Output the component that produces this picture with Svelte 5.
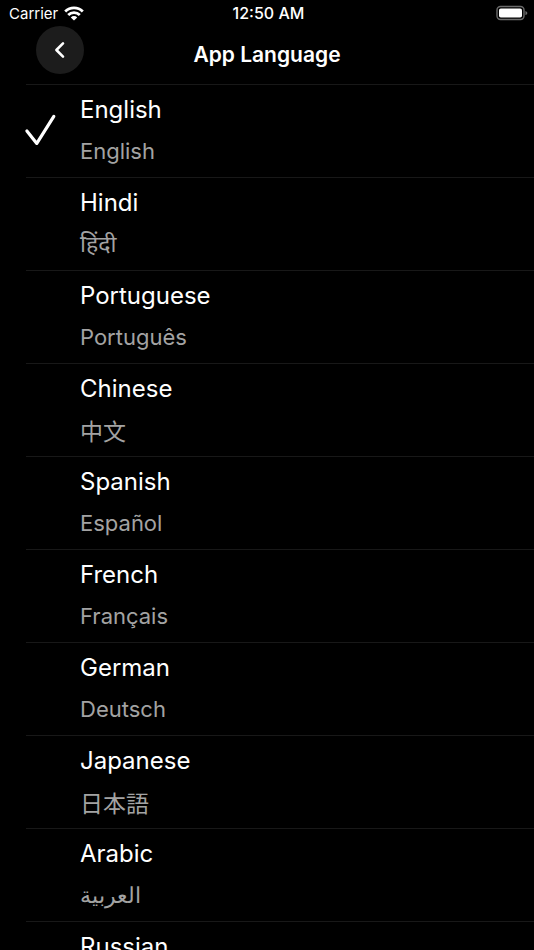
<script>
  let selected = "en";

  const languages = [
    { code: "en", name: "English", native: "English" },
    { code: "hi", name: "Hindi", native: "हिंदी" },
    { code: "pt", name: "Portuguese", native: "Português" },
    { code: "zh", name: "Chinese", native: "中文" },
    { code: "es", name: "Spanish", native: "Español" },
    { code: "fr", name: "French", native: "Français" },
    { code: "de", name: "German", native: "Deutsch" },
    { code: "ja", name: "Japanese", native: "日本語" },
    { code: "ar", name: "Arabic", native: "العربية" },
    { code: "ru", name: "Russian", native: "Русский" }
  ];

  const select = (code) => (selected = code);
  const goBack = () => history.back();
</script>

<div class="screen">
  <div class="status">
    <div class="carrier">
      <span>Carrier</span>
      <svg width="20" height="15" viewBox="0 0 20 15" fill="none" stroke="#fff" stroke-width="2.8">
        <path d="M1.2 5.4a12.6 12.6 0 0 1 17.6 0" />
        <path d="M4.2 9a8.2 8.2 0 0 1 11.6 0" />
        <path d="M10 14.6l-3.2-3.2a4.5 4.5 0 0 1 6.4 0z" fill="#fff" stroke="none" />
      </svg>
    </div>
    <span class="time">12:50 AM</span>
    <svg class="battery" width="32" height="16" viewBox="0 0 32 16">
      <rect x="1" y="1.5" width="27" height="13" rx="3.5" fill="none" stroke="#6b6b6b" stroke-width="1.4" />
      <rect x="3" y="3.5" width="23" height="9" rx="1.8" fill="#fff" />
      <path d="M29.4 5.9c1.4.5 1.9 1.2 1.9 2.1s-.5 1.6-1.9 2.1z" fill="#6b6b6b" />
    </svg>
  </div>

  <header>
    <button class="back" aria-label="Back" on:click={goBack}>
      <svg width="12" height="18" viewBox="0 0 12 18" fill="none" stroke="#fff" stroke-width="2.6" stroke-linecap="round" stroke-linejoin="round">
        <path d="M9 2.4L2.4 9L9 15.6" />
      </svg>
    </button>
    <h1>App Language</h1>
  </header>

  <ul>
    {#each languages as language}
      <li>
        <button class="row" aria-pressed={selected === language.code} on:click={() => select(language.code)}>
          <span class="check">
            {#if selected === language.code}
              <svg width="32" height="32" viewBox="0 0 32 32" fill="none" stroke="#fff" stroke-width="3.2" stroke-linecap="round" stroke-linejoin="round">
                <path d="M.9 17L10.8 29.4L27.8 2.4" />
              </svg>
            {/if}
          </span>
          <span class="names">
            <span class="name">{language.name}</span>
            <span class="native" lang={language.code}>{language.native}</span>
          </span>
        </button>
      </li>
    {/each}
  </ul>
</div>

<style>
  :global(body) {
    background: #000;
  }

  .screen {
    display: flex;
    flex-direction: column;
    height: 100vh;
    background: #000;
    color: #fff;
    font-family: Inter, "Noto Sans", "Noto Sans CJK SC", sans-serif;
  }

  .status {
    display: grid;
    grid-template-columns: 1fr auto 1fr;
    align-items: center;
    height: 26px;
    padding: 0 6px 0 9px;
    font-size: 15px;
  }

  .carrier {
    display: flex;
    align-items: center;
    gap: 6px;
  }

  .time {
    font-size: 16px;
    font-weight: 500;
  }

  .battery {
    justify-self: end;
  }

  header {
    display: grid;
    grid-template-columns: 1fr auto 1fr;
    align-items: start;
    height: 58px;
    padding: 0 36px;
  }

  .back {
    display: flex;
    align-items: center;
    justify-content: center;
    width: 48px;
    height: 48px;
    padding: 0;
    border: none;
    border-radius: 50%;
    background: #1c1c1c;
    cursor: pointer;
  }

  h1 {
    margin: 0;
    padding-top: 15px;
    font-size: 21px;
    line-height: 28px;
    font-weight: 600;
  }

  ul {
    flex: 1;
    margin: 0;
    padding: 0 0 0 26px;
    list-style: none;
    overflow-y: auto;
    scrollbar-width: none;
  }

  li {
    border-top: 1px solid #181818;
  }

  .row {
    display: flex;
    align-items: center;
    width: 100%;
    height: 92px;
    padding: 0 0 2px;
    border: none;
    background: none;
    color: inherit;
    font-family: inherit;
    text-align: left;
    cursor: pointer;
  }

  .check {
    display: flex;
    width: 54px;
  }

  .check svg {
    overflow: visible;
  }

  .names {
    display: flex;
    flex-direction: column;
    gap: 9px;
  }

  .name {
    font-size: 24px;
    line-height: 32px;
  }

  .native {
    font-size: 22px;
    line-height: 32px;
    color: #a3a3a3;
  }

  .native:lang(zh),
  .native:lang(ja) {
    font-family: "Noto Sans CJK SC", sans-serif;
    font-size: 23px;
  }

  .native:lang(ja) {
    font-family: "Noto Sans CJK JP", sans-serif;
  }

  .native:lang(hi) {
    font-size: 23px;
  }
</style>
